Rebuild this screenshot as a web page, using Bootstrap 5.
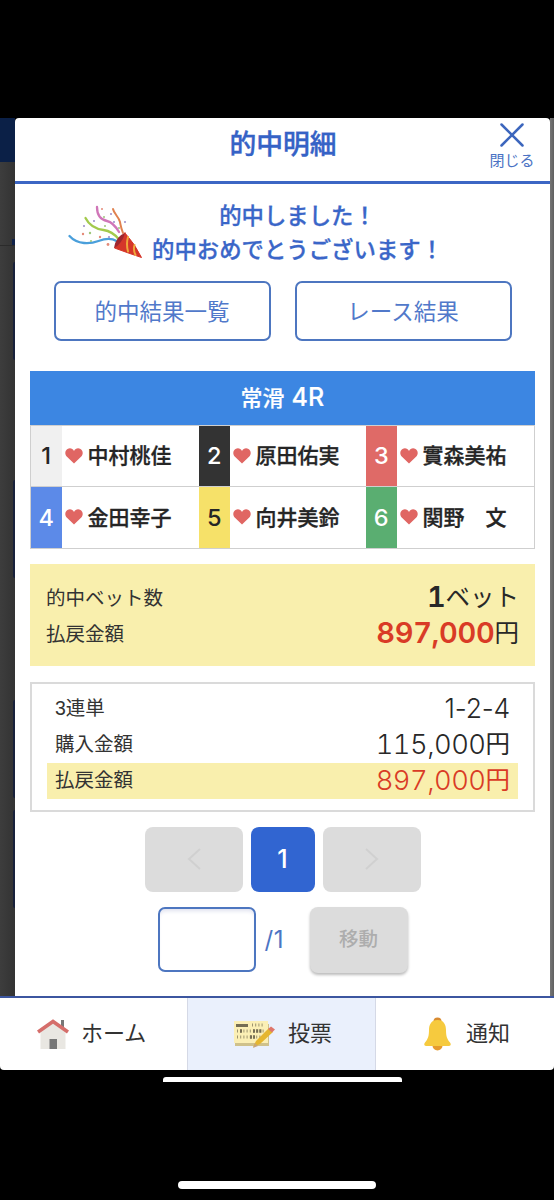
<!DOCTYPE html>
<html lang="ja">
<head>
<meta charset="utf-8">
<meta name="viewport" content="width=device-width, initial-scale=1">
<title>的中明細</title>
<link href="https://cdn.jsdelivr.net/npm/bootstrap@5.3.0/dist/css/bootstrap.min.css" rel="stylesheet">
<style>
body{background:#000;font-family:"Liberation Sans","Noto Sans CJK JP",sans-serif;color:#333;line-height:1}
.phone{width:554px;height:1200px;padding-top:118px;overflow:hidden}
.stage{height:878px}
.edge-l{width:15px;background:linear-gradient(90deg,#3d3d3d,#333)}
.edge-l .bar-top{height:44px;background:#0b2047}
.edge-l .tabs{height:84px;border-bottom:1px solid #2b2b2b}
.edge-l .tabmark{width:3px;height:6px;background:#10224a}
.edge-l .ghost{width:2px;height:98px;background:#18213b;border-radius:4px 0 0 4px}
.edge-r{width:4px;background:linear-gradient(90deg,#777,#606060)}
.sheet{width:535px;background:#fff;border-radius:4px 4px 0 0}
.head{height:66px;border-bottom:3px solid #3c66c4}
.title{font-size:26.8px;font-weight:500;color:#3562c6;line-height:55px;padding-left:69px;-webkit-text-stroke:.4px #3562c6}
.close-btn{width:60px;padding-top:5px;color:#4a72c4;font-size:15px;margin-right:8px}
.msg{height:97px;padding:16px 0 0 53px}
.msg p{font-size:22.4px;font-weight:500;color:#3a66c8;line-height:33.5px;-webkit-text-stroke:.3px #3a66c8}
.btn-line{width:217px;height:60px;border:2px solid #4d76c0;border-radius:7px;color:#5179ca;font-size:22.5px;padding:4px 0 0;line-height:1}
.race{margin:30px 15px 0 15px}
.race-h{height:53.5px;background:#3c86e2;color:#fff;font-size:22px;font-weight:500;font-family:Inter,"Noto Sans CJK JP",sans-serif;-webkit-text-stroke:.2px #fff}
.race-h .rno{font-size:25px;letter-spacing:.3px;margin-left:7px}
.race-grid{display:grid;grid-template-columns:168px 167px 1fr;border:1px solid #cfcfcf}
.racer{height:61.5px;border-bottom:1px solid #cfcfcf;font-size:21px;font-weight:500;color:#252525;-webkit-text-stroke:.3px #252525}
.racer:nth-child(n+4){border-bottom:0;height:60.5px}
.no{width:30.5px;font-size:23.5px;font-weight:500;font-family:Inter,sans-serif}
.no{-webkit-text-stroke:0}
.heart{width:18px;height:16px;margin:0 5px 0 3px}
.total{margin:15px 15px 0;height:102px;background:#f9efad;padding:15px 16px 0 16px}
.line{height:36.3px;font-size:19.5px}
.val{font-size:24.5px;color:#282828}
.val .num{font-size:27.3px;font-weight:300;font-family:Inter,sans-serif;font-variant-numeric:tabular-nums;letter-spacing:-.5px}
.val .combo{font-variant-numeric:normal;letter-spacing:-.2px;font-size:26.5px}
.val b.num{font-size:29px;font-weight:600;letter-spacing:-.3px}
.val .unit{position:relative;top:-1px}
.red{color:#d93b26}
.detail{margin:16px 15px 0;height:130px;border:2px solid #dadada;padding:7px 15px 0}
.detail .line{padding:0 8px}
.hit{background:#f9efad}
.pg{width:98px;height:65px;border-radius:8px;background:#dcdcdc;border:0}
.pg.now{width:64px;background:#3165d1;color:#fff;font-size:25px;font-weight:500;font-family:Inter,sans-serif}
.num-input{width:98px;height:65px;border:2px solid #4d76c0;border-radius:7px;box-shadow:inset 0 4px 4px -2px #dfe1ef;padding:0}
.slash{width:54px;padding-left:9px;color:#4c75c4;font-size:24px;font-family:Inter,sans-serif;letter-spacing:.5px}
.move{color:#adadad;font-size:19.5px;font-weight:500;height:66px;box-shadow:0 2px 3px #bbb}
.tabbar{height:74px;border-top:2px solid #3c56a0;border-radius:0 0 4px 4px;background:#fff;overflow:hidden}
.tab-i{font-size:22px;color:#333}
.on{background:#eaf0fc;border:1px solid #d5d9e6;border-width:0 1px}
.home1{width:239px;height:5px;background:#fff;border-radius:3px 3px 0 0;margin:7px 0 0 163px}
.home2{width:198px;height:8px;background:#fff;border-radius:4px;margin:99px 0 0 178px}
</style>
</head>
<body>
<div class="phone">
  <div class="stage d-flex">
    <div class="edge-l d-flex flex-column align-items-end">
      <div class="bar-top w-100"></div>
      <div class="tabs w-100 d-flex justify-content-end align-items-end"><div class="tabmark"></div></div>
      <div class="ghost mt-3"></div>
      <div class="ghost" style="margin-top:120px"></div>
      <div class="ghost" style="margin-top:122px"></div>
      <div class="ghost" style="margin-top:12px"></div>
    </div>
    <main class="sheet">
      <header class="head d-flex">
        <div class="title flex-grow-1 text-center">的中明細</div>
        <div class="close-btn d-flex flex-column align-items-center">
          <svg width="24" height="24" viewBox="0 0 24 24" stroke="#3c66bd" stroke-width="2.5" stroke-linecap="round"><path d="M1.5 1.5l21 21M22.500 1.500l-21 21"/></svg>
          <span style="margin-top:6px">閉じる</span>
        </div>
      </header>
      <div class="msg d-flex">
        <svg width="76" height="55" viewBox="0 0 76 55" fill="none" stroke-width="2.300" stroke-linecap="round" style="margin-top:3px">
          <path d="M1.500 33c8 9 21 8 29 5s13-3 18 0" stroke="#4a9fdb"/>
          <path d="M17.500 15c4 8 11 11 18 12s11 4 15 9" stroke="#a3ca4c"/>
          <path d="M29 4c0 10 5 13 10 14s9 6 12 11" stroke="#d076b8"/>
          <path d="M45 6c1 5 6 8 7 13s1 6 3 11" stroke="#e0814f" stroke-width="2"/>
          <path d="M57 30L46.500 45Q60 50 73.500 54.500Q67 41 57 30z" fill="#d5362a" stroke="#d5362a" stroke-width="1"/>
          <path d="M57 30q-9 3-11 15q8-4 11-15z" fill="#9e2730"/>
          <path d="M60 34q-2 7 0 14.500M66.500 42q-1.500 5 1 10" stroke="#f0a73b" stroke-width="2"/>
          <g stroke="none"><g fill="#e58a78"><circle cx="15" cy="31" r="1.200"/><circle cx="32" cy="34" r="1.200"/><circle cx="40" cy="41.500" r="1.400"/><circle cx="34" cy="6" r="1"/></g>
          <g fill="#9dc77b"><circle cx="23" cy="38" r="1"/><circle cx="36" cy="14" r="1"/><circle cx="37" cy="23" r="1"/><circle cx="22" cy="30" r="1.200"/><circle cx="51" cy="25" r="1"/></g>
          <g fill="#9a8ac8"><circle cx="26" cy="18" r="1"/><circle cx="41" cy="34" r="1"/><circle cx="57" cy="19" r="1"/><circle cx="16" cy="23" r="1"/><circle cx="46" cy="19" r="1"/><circle cx="43" cy="11" r="1"/></g></g>
        </svg>
        <div class="text-center" style="margin-left:8px"><p class="mb-0">的中しました！</p><p class="mb-0">的中おめでとうございます！</p></div>
      </div>
      <div class="d-flex justify-content-center gap-4">
        <button class="btn btn-line">的中結果一覧</button>
        <button class="btn btn-line">レース結果</button>
      </div>
      <section class="race">
        <div class="race-h d-flex align-items-center justify-content-center">常滑 <span class="rno">4R</span></div>
        <div class="race-grid" id="racers"></div>
      </section>
      <section class="total">
        <div class="line d-flex justify-content-between align-items-center"><span class="pt-1">的中ベット数</span><span class="val"><b class="num">1</b><span class="unit">ベット</span></span></div>
        <div class="line d-flex justify-content-between align-items-center"><span class="pt-1">払戻金額</span><span class="val"><b class="num red">897,000</b><span class="unit">円</span></span></div>
      </section>
      <section class="detail">
        <div class="line d-flex justify-content-between align-items-center"><span>3連単</span><span class="val"><span class="num combo">1-2-4</span></span></div>
        <div class="line d-flex justify-content-between align-items-center"><span>購入金額</span><span class="val"><span class="num">115,000</span><span class="unit">円</span></span></div>
        <div class="line hit d-flex justify-content-between align-items-center"><span>払戻金額</span><span class="val red"><span class="num">897,000</span><span class="unit">円</span></span></div>
      </section>
      <div class="d-flex justify-content-center gap-2" style="margin-top:15px">
        <div class="pg d-flex align-items-center justify-content-center"><svg width="14" height="22" fill="none" stroke="#d0d0d0" stroke-width="2"><path d="M13 1L2 11l11 10"/></svg></div>
        <div class="pg now d-flex align-items-center justify-content-center">1</div>
        <div class="pg d-flex align-items-center justify-content-center"><svg width="14" height="22" fill="none" stroke="#d0d0d0" stroke-width="2"><path d="M1 1l11 10L1 21"/></svg></div>
      </div>
      <div class="d-flex justify-content-center align-items-start" style="margin-top:15px">
        <input class="num-input" aria-label="ページ">
        <div class="slash align-self-center">/1</div>
        <div class="pg move d-flex align-items-center justify-content-center">移動</div>
      </div>
    </main>
    <div class="edge-r"></div>
  </div>
  <nav class="tabbar d-flex">
    <div class="tab-i d-flex align-items-center" style="width:187px;padding-left:37px">
      <svg width="32" height="30" viewBox="0 0 32 30"><path d="M24 1h3v9h-3z" fill="#777"/><path d="M3.500 12L16 3l12.500 9v18h-25z" fill="#e9e7e2"/><path d="M12.500 20h7.500v10h-7.500z" fill="#777"/><path d="M1 13L16 2.500 31 13" fill="none" stroke="#d56e6b" stroke-width="3.600"/></svg>
      <span style="margin-left:12px">ホーム</span>
    </div>
    <div class="tab-i on d-flex align-items-center" style="width:189px;padding-left:45px">
      <svg width="42" height="30" viewBox="0 0 42 30"><path d="M2 5h34v22H2z" fill="#cfc18b"/><path d="M1 2h34v22H1z" fill="#fbefb5"/><path d="M3 5h12v3H3z" fill="#756d53"/><g fill="none" stroke="#756d53" stroke-width="3" stroke-dasharray="1 2.200"><path d="M19 6h12M4 12h28M4 18h26" stroke-opacity=".7"/><path d="M7 12h3M20 12h9M17 18h5" stroke-dasharray="2 1.200" stroke-width="3.500"/></g><path d="M20 28l3-6L36 9l4 4-13 12z" fill="#e5b62f"/><path d="M20 29l2-5 3 3z" fill="#c8a578"/><path d="M35 10l3-2.500 4 3-3 3z" fill="#df766b"/></svg>
      <span style="margin-left:13px">投票</span>
    </div>
    <div class="tab-i d-flex align-items-center" style="padding-left:48px">
      <svg width="27" height="34" viewBox="0 0 27 34"><circle cx="13.500" cy="4.500" r="4" fill="#d98b31"/><circle cx="13.500" cy="28.500" r="5" fill="#e69b2d"/><path d="M13.500 3C20 3 22 8 22 13c0 6 1 9 4 12.500 1.500 2 .5 3.500-1 3.500H2c-1.500 0-2.500-1.500-1-3.500C4 22 5 19 5 13c0-5 2-10 8.500-10z" fill="#f6ca3e"/></svg>
      <span style="margin-left:15px">通知</span>
    </div>
  </nav>
  <div class="home1"></div>
  <div class="home2"></div>
</div>
<script>
const racers=[['中村桃佳','#f0f0f0','#252525'],['原田佑実','#333333','#fff'],['實森美祐','#df6a67','#fff'],['金田幸子','#5c8ae8','#fff'],['向井美鈴','#f6e169','#252525'],['関野　文','#5aae71','#fff']];
document.getElementById('racers').innerHTML=racers.map((r,i)=>`<div class="racer d-flex align-items-center"><div class="no h-100 d-flex align-items-center justify-content-center" style="background:${r[1]};color:${r[2]}">${i+1}</div><svg class="heart" viewBox="0 0 18 16"><path d="M9 15.500L1.700 8.500C-.5 6 0 2.500 2.500 1 5-.4 7.700.5 9 3c1.300-2.500 4-3.400 6.500-2C18 2.500 18.500 6 16.300 8.500z" fill="#e06663"/></svg><span>${r[0]}</span></div>`).join('');
</script>
<script src="https://cdn.jsdelivr.net/npm/bootstrap@5.3.0/dist/js/bootstrap.bundle.min.js"></script>
</body>
</html>
